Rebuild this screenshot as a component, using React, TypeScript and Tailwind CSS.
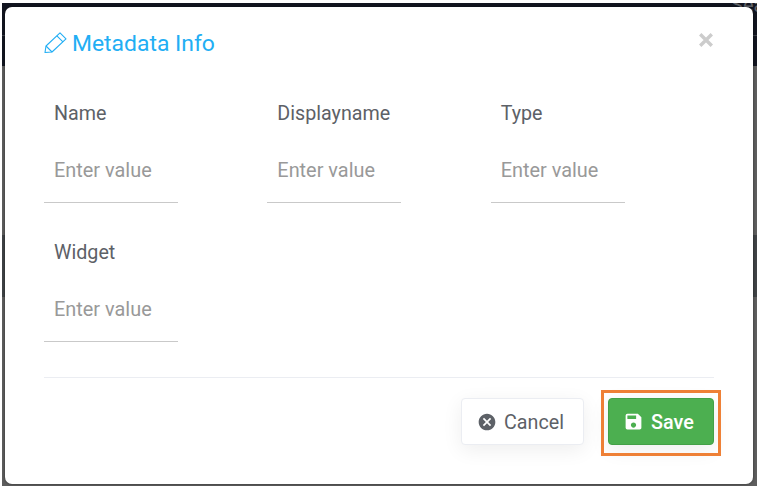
import React from "react";
import { MdCancel, MdSave } from "react-icons/md";

function Field({ label }: { label: string }) {
  return (
    <label className="block h-[139px]">
      <span className="block h-8 pt-px pl-2.5 text-[19.7px] leading-8 text-[#5d6167]">{label}</span>
      <input
        type="text"
        placeholder="Enter value"
        className="mt-[9px] block h-[65px] w-[134px] border-b border-[#c9c9c9] bg-transparent pl-2.5 text-[19.9px] outline-none placeholder:text-[#999999] placeholder:opacity-100"
      />
    </label>
  );
}

export default function App() {
  return (
    <div className="h-[487px] w-[760px] overflow-hidden bg-white pt-[3px] pl-[2px] font-['Roboto',sans-serif] text-[20px]">
      <div className="relative h-[483px] w-[755px] overflow-hidden">
        <div className="absolute inset-0 flex flex-col">
          <div className="h-[63px] bg-[#121520]">
            <div className="absolute -top-[10px] left-[729px] text-[20px] leading-6 text-[#606268]">Sea</div>
            <div className="mt-8 h-px bg-[#3d4049]" />
          </div>
          <div className="h-[169px] bg-[#5e5e5e]" />
          <div className="h-[62px] bg-[#404346]" />
          <div className="grow bg-[#5e5e5e]" />
        </div>
        <div className="relative mt-[4px] ml-[3px] h-[477px] w-[748px] rounded-[7px] bg-white pr-[39px] pl-[39px] shadow-[0_0_3px_rgba(0,0,0,0.5)]">
          <header className="flex h-[90px] items-start justify-between pt-[21px]">
            <h1 className="flex items-start text-[22.9px] leading-8 text-[#22aef4]">
              <svg width="23" height="22" viewBox="0 0 23 22" className="mt-1 mr-[5px]" fill="none" stroke="currentColor" strokeWidth="1.1" strokeLinejoin="round">
                <path d="M1 20.5 2 14 16 .9 22 6.9 8 20Z" />
                <path d="M2 14 8 20M12.9 3.9l6 6" />
              </svg>
              <span>Metadata Info</span>
            </h1>
            <button type="button" aria-label="Close" className="mt-[5px] mr-[1px]">
              <svg width="14" height="14" viewBox="0 0 14 14" stroke="#cccccc" strokeWidth="3.4">
                <path d="m1.2 1.2 11.6 11.6M12.8 1.2 1.2 12.8" />
              </svg>
            </button>
          </header>
          <div className="grid h-[280px] grid-cols-3 content-start">
            <Field label="Name" />
            <Field label="Displayname" />
            <Field label="Type" />
            <Field label="Widget" />
          </div>
          <footer className="flex justify-end gap-6 border-t border-[#ebedf2] pt-5">
            <button type="button" className="flex h-[47px] w-[123px] items-center rounded-[4px] border border-[#ebedf2] bg-white pl-[15px] text-[19.7px] text-[#5d6167] shadow-[0_5px_20px_rgba(0,0,0,0.07)]">
              <MdCancel size={20} className="mr-[7px]" />
              <span className="pt-0.5">Cancel</span>
            </button>
            <div className="relative">
              <button type="button" className="flex h-[47px] w-[106px] items-center rounded-[4px] border border-[#43a047] bg-[#4caf50] pl-[14px] text-[19.8px] font-medium text-white shadow-[0_5px_20px_rgba(0,0,0,0.07)]">
                <MdSave size={21} className="mr-[7px]" />
                <span className="pt-0.5">Save</span>
              </button>
              <div className="pointer-events-none absolute -top-2 -left-[7.5px] h-[65.5px] w-[120px] border-3 border-[#ee8036]" />
            </div>
          </footer>
        </div>
      </div>
    </div>
  );
}
